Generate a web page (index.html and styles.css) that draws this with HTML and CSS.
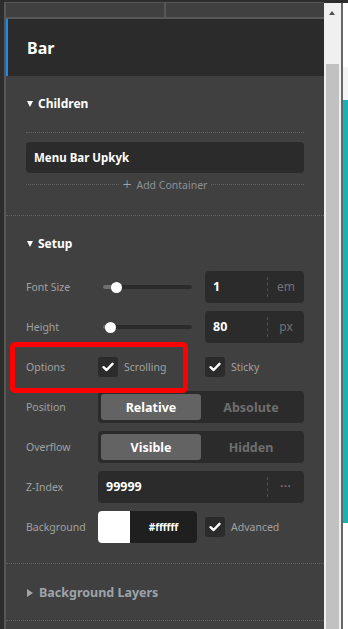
FILE: index.html
```html
<!DOCTYPE html>
<html lang="en">
<head>
  <meta charset="UTF-8" />
  <meta name="viewport" content="width=device-width, initial-scale=1.0"/>
  <title>Bar settings</title>
  <link rel="stylesheet" href="styles.css">
</head>
<body>
  <div class="window">
    <div class="panel">
      <div class="tabs">
        <div class="tab"></div>
        <div class="tab"></div>
      </div>

      <div class="title-bar">
        <h1>Bar</h1>
      </div>

      <section class="group">
        <h2 class="group-title open">Children</h2>
        <div class="children">
          <div class="child-item">Menu Bar Upkyk</div>
          <div class="add-row">
            <span class="add-btn"><span class="plus">+</span> Add Container</span>
          </div>
        </div>
      </section>

      <section class="group">
        <h2 class="group-title open">Setup</h2>
        <div class="fields">
          <div class="row">
            <span class="label">Font Size</span>
            <div class="control split">
              <div class="slider"><span class="fill" style="width: 13px"></span><span class="knob" style="left: 13px"></span></div>
              <div class="num-input"><span class="value">1</span><span class="unit">em</span></div>
            </div>
          </div>

          <div class="row">
            <span class="label">Height</span>
            <div class="control split">
              <div class="slider"><span class="fill" style="width: 7px"></span><span class="knob" style="left: 7px"></span></div>
              <div class="num-input"><span class="value">80</span><span class="unit">px</span></div>
            </div>
          </div>

          <div class="row highlighted">
            <span class="label">Options</span>
            <div class="control pair">
              <label class="check"><span class="box"><svg viewBox="0 0 12 10" width="12" height="10"><polyline points="1.5,5.2 4.6,8 10.5,1.8" fill="none" stroke="#fff" stroke-width="2.4" stroke-linecap="round" stroke-linejoin="round"/></svg></span>Scrolling</label>
              <label class="check"><span class="box"><svg viewBox="0 0 12 10" width="12" height="10"><polyline points="1.5,5.2 4.6,8 10.5,1.8" fill="none" stroke="#fff" stroke-width="2.4" stroke-linecap="round" stroke-linejoin="round"/></svg></span>Sticky</label>
            </div>
            <div class="marker"></div>
          </div>

          <div class="row">
            <span class="label">Position</span>
            <div class="control segmented">
              <span class="seg active">Relative</span>
              <span class="seg">Absolute</span>
            </div>
          </div>

          <div class="row">
            <span class="label">Overflow</span>
            <div class="control segmented">
              <span class="seg active">Visible</span>
              <span class="seg">Hidden</span>
            </div>
          </div>

          <div class="row">
            <span class="label">Z-Index</span>
            <div class="control">
              <div class="num-input wide"><span class="value">99999</span><span class="unit dots">&bull;&bull;&bull;</span></div>
            </div>
          </div>

          <div class="row">
            <span class="label">Background</span>
            <div class="control pair">
              <div class="swatch"><span class="color" style="background: #ffffff"></span><span class="hex">#ffffff</span></div>
              <label class="check"><span class="box"><svg viewBox="0 0 12 10" width="12" height="10"><polyline points="1.5,5.2 4.6,8 10.5,1.8" fill="none" stroke="#fff" stroke-width="2.4" stroke-linecap="round" stroke-linejoin="round"/></svg></span>Advanced</label>
            </div>
          </div>
        </div>
      </section>

      <section class="group">
        <h2 class="group-title closed">Background Layers</h2>
      </section>
    </div>

    <div class="scrollbar">
      <span class="arrow-up"></span>
      <div class="thumb"></div>
    </div>

    <div class="canvas">
      <div class="canvas-top"></div>
      <div class="canvas-shade"></div>
      <div class="canvas-teal"></div>
    </div>
  </div>
</body>
</html>
```

FILE: styles.css
```css
body {
  margin: 0;
  padding: 0;
  background: #2d2d2d;
  font-family: "Segoe UI", "Noto Sans", sans-serif;
  color: #ecf0f1;
  overflow: hidden;
}

.window {
  display: flex;
  height: 629px;
  padding: 2px 0 0 4px;
  box-sizing: border-box;
}

.panel {
  width: 318px;
  background: #404040;
  border-left: 2px solid #575757;
  border-top: 1px solid #575757;
}

.tabs {
  display: flex;
  gap: 2px;
  height: 14px;
  background: #575757;
  border-bottom: 2px solid #575757;
}

.tab {
  flex: 1;
  background: #404040;
}

.title-bar {
  height: 57px;
  background: #2b2b2b;
  border-left: 2px solid #1a8cf0;
  display: flex;
  align-items: center;
  padding-left: 19px;
}

.title-bar h1 {
  margin: 0;
  font-size: 16px;
  font-weight: bold;
  color: #fff;
}

.group {
  border-bottom: 1px dotted #626262;
  padding: 20px 20px 20px 20px;
}

.group:last-child {
  padding-top: 21px;
  padding-bottom: 19px;
}

.group-title {
  margin: 0;
  height: 16px;
  line-height: 16px;
  font-size: 12px;
  font-weight: bold;
  color: #fff;
  display: flex;
  align-items: center;
  gap: 5px;
  padding-left: 1px;
}

.group-title.open::before {
  content: "";
  border-left: 3.5px solid transparent;
  border-right: 3.5px solid transparent;
  border-top: 6px solid #fff;
}

.group-title.closed {
  color: #9ea3aa;
  font-size: 12.5px;
  gap: 6px;
}

.group-title.closed::before {
  content: "";
  border-top: 4px solid transparent;
  border-bottom: 4px solid transparent;
  border-left: 6px solid #a3a3a3;
}

.children {
  margin-top: 20px;
  border-top: 1px dotted #626262;
  padding-top: 9px;
  padding-bottom: 3px;
}

.child-item {
  height: 31px;
  line-height: 31px;
  background: #2b2b2b;
  border-radius: 4px;
  padding-left: 8px;
  font-size: 11.5px;
  font-weight: bold;
  color: #fff;
}

.add-row {
  display: flex;
  align-items: center;
  margin-top: 3px;
  height: 16px;
}

.add-row::before, .add-row::after {
  content: "";
  flex: 1;
  border-top: 1px dotted #626262;
}

.add-btn {
  padding: 0 4px;
  font-size: 10.5px;
  color: #8d9096;
}

.add-btn .plus {
  font-size: 16px;
  font-weight: 300;
  color: #a0a0a0;
  margin-right: 2px;
  vertical-align: -1px;
}

.fields {
  margin-top: 19px;
  display: flex;
  flex-direction: column;
  gap: 8px;
}

.row {
  display: grid;
  grid-template-columns: 72px 206px;
  align-items: center;
  height: 32px;
}

.label {
  font-size: 10.5px;
  color: #a0a0a0;
}

.control.split {
  display: flex;
  align-items: center;
  justify-content: space-between;
}

.slider {
  position: relative;
  width: 89px;
  height: 4px;
  margin-left: 5px;
  background: #2b2b2b;
  border-radius: 2px;
}

.slider .fill {
  display: block;
  height: 4px;
  background: #707070;
  border-radius: 2px 0 0 2px;
}

.slider .knob {
  position: absolute;
  top: -3.5px;
  width: 11px;
  height: 11px;
  margin-left: -5.5px;
  border-radius: 50%;
  background: #fff;
}

.num-input {
  display: flex;
  width: 99px;
  height: 32px;
  background: #2b2b2b;
  border-radius: 4px;
  box-sizing: border-box;
}

.num-input.wide {
  width: 206px;
}

.num-input .value {
  flex: 1;
  padding-left: 8px;
  line-height: 32px;
  font-size: 12.5px;
  font-weight: bold;
  color: #fff;
}

.num-input .unit {
  width: 36px;
  margin: 6px 0;
  border-left: 1px dashed #505050;
  text-align: center;
  line-height: 20px;
  font-size: 12px;
  color: #747474;
}

.num-input .unit.dots {
  font-size: 7px;
  letter-spacing: 1px;
  color: #7f7f7f;
}

.control.pair {
  display: grid;
  grid-template-columns: 107px 1fr;
  align-items: center;
}

.check {
  display: flex;
  align-items: center;
  gap: 6px;
  font-size: 10.5px;
  color: #a0a0a0;
}

.check .box {
  width: 20px;
  height: 20px;
  border-radius: 3px;
  background: #2b2b2b;
  display: flex;
  align-items: center;
  justify-content: center;
}

.highlighted {
  position: relative;
}

.marker {
  position: absolute;
  left: -16px;
  top: -9px;
  width: 178px;
  height: 51px;
  border: 5px solid #ff0000;
  border-radius: 5px;
  box-sizing: border-box;
}

.control.segmented {
  display: flex;
  height: 32px;
  padding: 3px;
  box-sizing: border-box;
  background: #2b2b2b;
  border-radius: 4px;
}

.seg {
  flex: 1;
  display: flex;
  align-items: center;
  justify-content: center;
  border-radius: 3px;
  font-size: 12.5px;
  font-weight: bold;
  color: #6e6e6e;
}

.seg.active {
  background: #636363;
  color: #fff;
}

.swatch {
  display: flex;
  width: 99px;
  height: 32px;
  border-radius: 4px;
  overflow: hidden;
  background: #1f1f1f;
}

.swatch .color {
  width: 32px;
}

.swatch .hex {
  flex: 1;
  text-align: center;
  line-height: 32px;
  font-size: 10px;
  font-weight: bold;
  color: #fff;
}

.scrollbar {
  position: relative;
  width: 17px;
  background: #f0f0f0;
  margin-top: 1px;
}

.arrow-up {
  position: absolute;
  left: 5px;
  top: 8px;
  border-left: 3.5px solid transparent;
  border-right: 3.5px solid transparent;
  border-bottom: 4px solid #505050;
}

.scrollbar .thumb {
  position: absolute;
  left: 2px;
  right: 2px;
  top: 61px;
  bottom: 0;
  background: #c1c1c1;
}

.canvas {
  flex: 1;
  border-left: 2px solid #676767;
  margin-top: 1px;
  background: #ffffff;
}

.canvas-top {
  height: 64px;
}

.canvas-shade {
  height: 33px;
  background: #f4f4f4;
}

.canvas-teal {
  height: 423px;
  background: #12b4b7;
}
```
